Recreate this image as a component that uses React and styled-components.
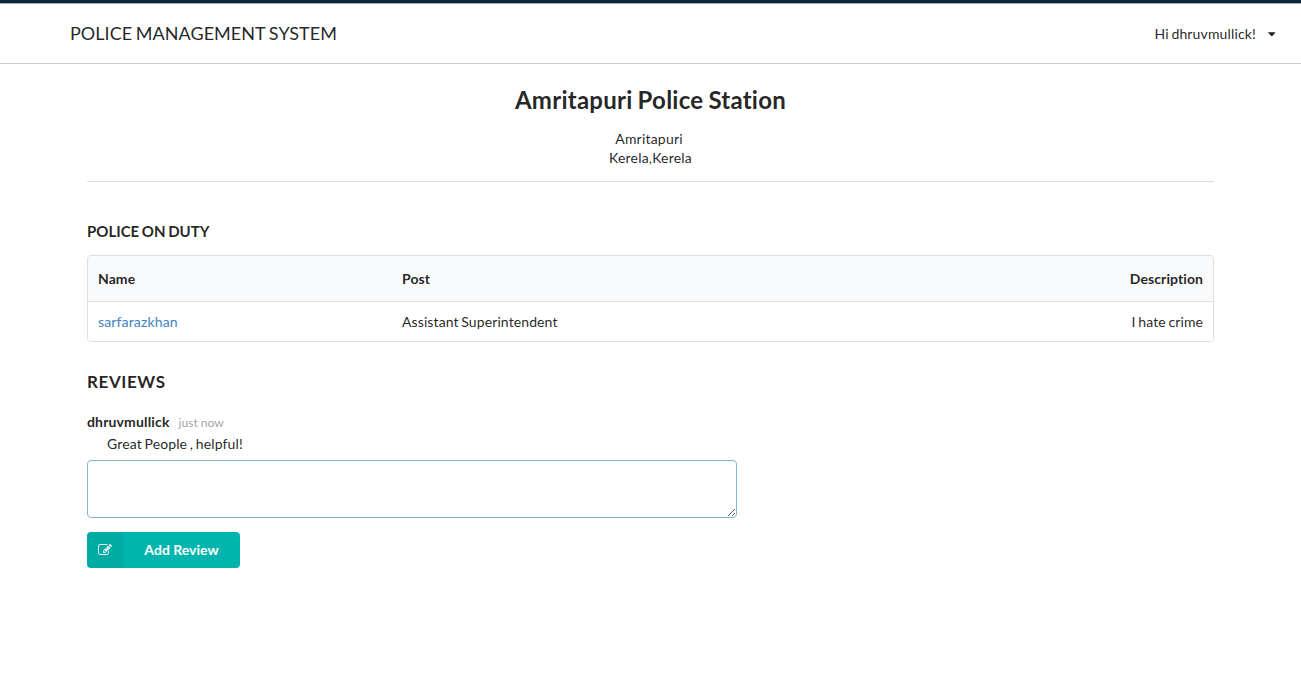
import React from "react";
import styled, { createGlobalStyle } from "styled-components";

const GlobalStyle = createGlobalStyle`
  *, *::before, *::after { box-sizing: border-box; }
  body {
    margin: 0;
    background: #fff;
    color: rgba(0, 0, 0, 0.87);
    font: 14px/20px Lato, "Liberation Sans", sans-serif;
    font-variant-ligatures: none;
    letter-spacing: 0.15px;
    word-spacing: -1px;
  }
`;

const Header = styled.header`
  height: 64px;
  padding: 0 25px 0 70px;
  display: flex;
  align-items: center;
  justify-content: space-between;
  border-top: 3px solid #0b2533;
  border-bottom: 1px solid #ccc;
  box-shadow: inset 0 1px 0 #a5adb1;
`;

const Brand = styled.div`
  font-size: 18px;
  line-height: 26px;
  letter-spacing: 0.04px;
`;

const UserMenu = styled.div`
  display: flex;
  align-items: center;
  padding-top: 1px;
`;

const Caret = styled.svg`
  width: 8px;
  height: 5px;
  margin: 1px 0 0 12px;
  fill: currentColor;
`;

const Content = styled.main`
  width: 1127px;
  margin: 0 auto;
`;

const Station = styled.section`
  height: 118px;
  padding-top: 20px;
  border-bottom: 1px solid #dcddde;
  text-align: center;
`;

const StationName = styled.h1`
  margin: 0 0 14px;
  font-size: 24px;
  line-height: 31px;
  font-weight: 700;
  letter-spacing: 0.24px;
`;

const Address = styled.div`
  line-height: 19px;
  padding-right: ${(p) => p.$trim || 0}px;
  letter-spacing: 0.2px;
`;

const SectionTitle = styled.h2`
  margin: ${(p) => p.$margin};
  font-size: ${(p) => p.$size}px;
  line-height: 20px;
  font-weight: 700;
  letter-spacing: ${(p) => p.$tracking || 0}px;
`;

const Table = styled.div`
  border: 1px solid #dededf;
  border-radius: 4px;
  overflow: hidden;
`;

const Row = styled.div`
  display: grid;
  grid-template-columns: 304px 1fr auto;
  align-items: center;
  padding: 0 10px;
  height: ${(p) => (p.$head ? 46 : 39)}px;
  font-weight: ${(p) => (p.$head ? 700 : 400)};
  letter-spacing: ${(p) => (p.$head ? "0.08px" : "0.1px")};
  background: ${(p) => (p.$head ? "#f9fafb" : "#fff")};
  border-bottom: ${(p) => (p.$head ? "1px solid #e1e2e3" : "0")};
`;

const UserLink = styled.a`
  color: #4183c4;
  letter-spacing: 0.15px;
  text-decoration: none;
`;

const Comment = styled.article`
  padding-top: 1px;
`;

const CommentHead = styled.div`
  display: flex;
  align-items: baseline;
  gap: 9px;
`;

const Author = styled.span`
  font-weight: 700;
`;

const Time = styled.span`
  color: rgba(0, 0, 0, 0.4);
  font-size: 12.25px;
  letter-spacing: 0;
  word-spacing: -0.5px;
`;

const CommentText = styled.p`
  margin: 1px 0 6px 20px;
  letter-spacing: 0.12px;
`;

const ReviewField = styled.textarea`
  display: block;
  width: 650px;
  height: 58px;
  padding: 11px 14px;
  border: 1px solid #85b7d9;
  border-radius: 4px;
  outline: none;
  background: #fff;
  font: inherit;
  resize: vertical;
`;

const Button = styled.button`
  display: flex;
  width: 153px;
  height: 36px;
  margin-top: 14px;
  padding: 0;
  border: 0;
  border-radius: 4px;
  overflow: hidden;
  background: #00b5ad;
  color: #fff;
  font: 700 14px/36px Lato, "Liberation Sans", sans-serif;
`;

const IconPane = styled.span`
  display: flex;
  align-items: center;
  justify-content: center;
  width: 36px;
  height: 36px;
  background: rgba(0, 0, 0, 0.05);
`;

const EditIcon = styled.svg`
  width: 14px;
  height: 14px;
  fill: currentColor;
  opacity: 0.9;
`;

const ButtonLabel = styled.span`
  flex: 1;
  text-align: center;
`;

const officers = [
  { name: "sarfarazkhan", post: "Assistant Superintendent", description: "I hate crime" },
];

export default function App() {
  return (
    <>
      <GlobalStyle />
      <Header>
        <Brand>POLICE MANAGEMENT SYSTEM</Brand>
        <UserMenu>
          Hi dhruvmullick!
          <Caret viewBox="0 0 8 5">
            <path d="M.6 .3h6.3q.6.2.2.8L4.3 4.1q-.5.5-1 0L.4 1.1Q0 .5.6 .3z" />
          </Caret>
        </UserMenu>
      </Header>
      <Content>
        <Station>
          <StationName>Amritapuri Police Station</StationName>
          <Address $trim={3}>Amritapuri</Address>
          <Address>Kerela,Kerela</Address>
        </Station>
        <SectionTitle $size={15} $margin="39px 0 14px">POLICE ON DUTY</SectionTitle>
        <Table>
          <Row $head>
            <span>Name</span>
            <span>Post</span>
            <span>Description</span>
          </Row>
          {officers.map((o) => (
            <Row key={o.name}>
              <UserLink>{o.name}</UserLink>
              <span>{o.post}</span>
              <span>{o.description}</span>
            </Row>
          ))}
        </Table>
        <SectionTitle $size={17} $tracking={0.6} $margin="30px 0 19px">REVIEWS</SectionTitle>
        <Comment>
          <CommentHead>
            <Author>dhruvmullick</Author>
            <Time>just now</Time>
          </CommentHead>
          <CommentText>Great People , helpful!</CommentText>
        </Comment>
        <ReviewField aria-label="Review" />
        <Button type="button">
          <IconPane>
            <EditIcon viewBox="0 0 1792 1792">
              <path d="M888 1184l116-116-152-152-116 116v56h96v96h56zm440-720q-16-16-33 1L945 815q-17 17-1 33t33-1l350-350q17-17 1-33zm80 594v190q0 119-84.5 203.5T1120 1536H288q-119 0-203.5-84.5T0 1248V416q0-119 84.5-203.5T288 128h832q63 0 117 25 15 7 18 23 3 17-10 30l-49 49q-14 14-32 8-23-7-45-7H288q-66 0-113 47t-47 113v832q0 66 47 113t113 47h832q66 0 113-47t47-113v-126q0-13 9-22l64-64q15-15 35-7t20 29zm-96-738l288 288-672 672H640V992zm444 132l-92 92-288-288 92-92q28-28 68-28t68 28l152 152q28 28 28 68t-28 68z" />
            </EditIcon>
          </IconPane>
          <ButtonLabel>Add Review</ButtonLabel>
        </Button>
      </Content>
    </>
  );
}
